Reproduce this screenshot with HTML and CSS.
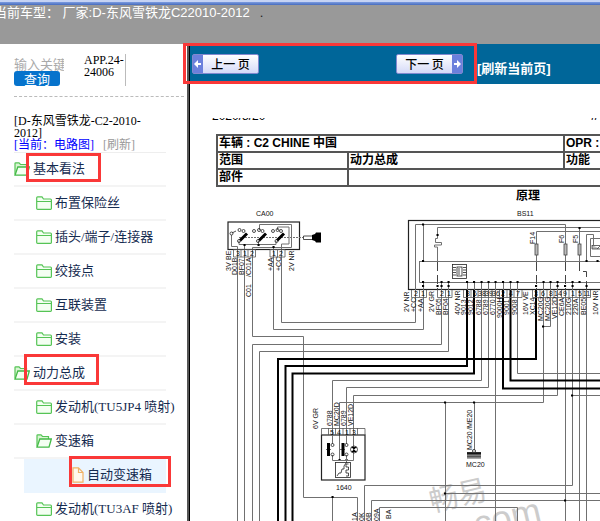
FILE: index.html
```html
<!DOCTYPE html>
<html lang="zh-CN">
<head>
<meta charset="utf-8">
<title>电路图</title>
<link rel="stylesheet" href="styles.css">
</head>
<body>
<svg class="defs" aria-hidden="true">
  <symbol id="closed" viewBox="0 0 16 14"><path d="M.7 12.5V1.7Q.7.8 1.6.8H6L7.5 3H14.500Q15.400 3 15.400 4V12.500Q15.400 13.300 14.500 13.300H1.600Q.7 13.300.7 12.500ZM1 5.500H15" fill="#f4fff2" stroke="#55c455" stroke-width="1.200"/></symbol>
  <symbol id="open" viewBox="0 0 16 14"><path d="M1 12.500V1.600Q1 .8 1.800.8H5L6.500 2.500H12.500V5" fill="#d9f5d3" stroke="#55c455" stroke-width="1.200"/><path d="M1 13.200L3.800 5H15.300L13 13.200Z" fill="#f4fff2" stroke="#45bb48" stroke-width="1.300"/></symbol>
  <symbol id="file" viewBox="0 0 12 16"><path d="M1 .8H6.500L11 5.500V15.200H1ZM6.500.8V5.500H11" fill="#fff8ec" stroke="#f0b266" stroke-width="1.200"/></symbol>
</svg>
<header class="top">当前车型： 厂家:<b>D-</b>东风雪铁龙<b>C22010-2012</b><i>.</i></header>
<div class="main">
  <aside class="side">
    <form class="search">
      <div class="query">
        <input type="text" placeholder="输入关键字" aria-label="输入关键字">
        <button type="button">查询</button>
      </div>
      <div class="code">APP.24-24006</div>
    </form>
    <div class="car">[D-东风雪铁龙-C2-2010-2012]</div>
    <div class="links"><a href="#" class="current">[当前：电路图]</a><a href="#" class="reload">[刷新]</a></div>
    <ul class="tree">
      <li><svg class="folder"><use href="#open"/></svg><a href="#">基本看法</a><span class="mark mark-a"></span></li>
      <li class="l2"><svg class="folder"><use href="#closed"/></svg><a href="#">布置保险丝</a></li>
      <li class="l2"><svg class="folder"><use href="#closed"/></svg><a href="#">插头/端子/连接器</a></li>
      <li class="l2"><svg class="folder"><use href="#closed"/></svg><a href="#">绞接点</a></li>
      <li class="l2"><svg class="folder"><use href="#closed"/></svg><a href="#">互联装置</a></li>
      <li class="l2"><svg class="folder"><use href="#closed"/></svg><a href="#">安装</a></li>
      <li><svg class="folder"><use href="#open"/></svg><a href="#">动力总成</a><span class="mark mark-b"></span></li>
      <li class="l2"><svg class="folder"><use href="#closed"/></svg><a href="#">发动机(TU5JP4 喷射)</a></li>
      <li class="l2"><svg class="folder"><use href="#open"/></svg><a href="#">变速箱</a></li>
      <li class="l3"><svg class="file"><use href="#file"/></svg><a href="#">自动变速箱</a><span class="mark mark-c"></span></li>
      <li class="l2"><svg class="folder"><use href="#closed"/></svg><a href="#">发动机(TU3AF 喷射)</a></li>
    </ul>
  </aside>
  <main class="view">
    <nav class="bar">
      <button type="button" class="page prev"><svg viewBox="0 0 10 18"><path d="M1 9L5 5V8H8V10H5V13Z"/></svg><span>上一 页</span></button>
      <button type="button" class="page next"><span>下一 页</span><svg viewBox="0 0 10 18"><path d="M9 9L5 5V8H2V10H5V13Z"/></svg></button>
      <a href="#">[刷新当前页]</a>
      <span class="mark mark-bar"></span>
    </nav>
    <div class="paper">
    <section class="sheet">
      <div class="date"><span>2020/8/20</span><span>//</span></div>
      <table>
        <colgroup><col class="c1"><col class="c2"><col></colgroup>
        <tr><td colspan="2">车辆 : C2 CHINE 中国</td><td>OPR : 1</td></tr>
        <tr><td>范围</td><td>动力总成</td><td>功能</td></tr>
        <tr><td>部件</td><td colspan="2"></td></tr>
      </table>
      <h1>原理</h1>
    </section>
    <svg class="wiring" viewBox="190 204 410 317" role="img" aria-label="原理">
      <g class="water"><text transform="translate(432 512) rotate(-13)" font-size="29">畅易</text><text transform="translate(467 539) rotate(-13)" font-size="36">.com</text></g>
      <!-- thin wires -->
      <path class="w" d="M237.500 249V521M244.500 249V521M252.500 249V336.500H303.500V497.500H357.500V521M252.500 521V344.500H441.500V290M259.500 521V351.500H448.500V290M273.500 249V329.500H423.500V290M281.500 249V322.500H415.500V290
      M332.500 435V380.500H481.500V290M339.500 460V402.500H543.500V290M346.500 435V387.500H488.500V290M353.500 435V395.500H557.500V290M332.500 497V521M495.500 290V521M517.500 290V373.500H600M550.500 290V326.500H543M565.500 290V521M572.500 290V485.500H364.500V521M572 395.500H600M579.500 290V521M586.500 290V521M371.500 521V500.500H600M379.500 521V507.500H517.500V521M445.500 402V521M445 493.500H600M474.500 402V450"/>
      <!-- heavy supply wires -->
      <path class="k" d="M278 521V359H536V290M285.500 521V366H467V290M292.500 521V373.500H474V290M503 290V388.500H600M510.500 290V380.500H600"/>
      <!-- ignition switch -->
      <rect class="box" x="228" y="222" width="71.500" height="27.500"/>
      <path class="w d" d="M239 237.500H303"/>
      <path class="w" d="M231.500 235V246.500H237.500V249M239 241V244.500H276V241M258.500 241V246M244.500 244V249M259.500 230V224.500H291.500V247.500H252.500V249M277.500 230V227H289V244H281.500V249M273.500 246V249"/>
      <path class="sw" d="M240 240.500L247 233.500M259 240.500L266 233.500M277 240.500L284 233.500"/>
      <g class="o"><circle cx="231.500" cy="233.500" r="1.500"/><circle cx="239.500" cy="230" r="1.500"/><circle cx="243.500" cy="231" r="1.500"/><circle cx="254" cy="231" r="1.500"/><circle cx="259" cy="230" r="1.500"/><circle cx="262.500" cy="231" r="1.500"/><circle cx="273" cy="231" r="1.500"/><circle cx="277.500" cy="230" r="1.500"/><circle cx="281" cy="231" r="1.500"/><circle cx="239" cy="241" r="1.500"/><circle cx="258" cy="241" r="1.500"/><circle cx="276.500" cy="241" r="1.500"/><path d="M232 233L236 231M303.500 236H313V239.500H303.500Z"/></g>
      <path d="M312 235L315 234L316 232.500H321V242.500H316L315 241L312 240Z"/>
      <path class="pin" d="M233.500 249.500H255.500V257H233.500ZM241 249V257M248 249V257M270 249.500H285V257H270ZM277.500 249V257"/>
      <!-- main control unit -->
      <rect class="box" x="408.500" y="220.500" width="200" height="69"/>
      <path class="w" d="M415.500 290V224.500H565.500V262M423.500 224V261M437.500 261V247H434.500V245H441.500V242.500H435.500V238.500H437.500V227.500H600M536.500 262V231.500H600M579.500 228V262M419.500 261.500H600M419.500 261V282.500H600M586.500 261V234.500H593.500V245M600 238.500H590.500V256.500H600"/>
      <path class="w dd" d="M437.500 262V290M536.500 262V290M565.500 262V290M579.500 262V271.500H586.500V290"/>
      <path class="w" d="M441.500 282V290M448.500 282V290M423.500 282V290M467.500 282V290M474.500 282V290M481.500 282V290M488.500 282V290M495.500 282V290M503.500 282V290M510.500 282V290M517.500 282V290M543.500 282V290M550.500 282V290M557.500 282V290M572.500 282V290"/>
      <g class="fuse"><rect x="535" y="244" width="3" height="11"/><rect x="564" y="244" width="3" height="11"/><rect x="578" y="244" width="3" height="11"/><path d="M592 245.500H600M592 245V249H600M597 249L600 246"/></g>
      <g class="o"><rect x="452.500" y="264.500" width="14" height="14"/><rect x="457" y="267" width="5" height="9"/><path d="M453 267.500H456M453 270H456M453 272.500H456M453 275H456M463 267.500H466M463 270H466M463 272.500H466M463 275H466M459 268V275"/></g>
      <path class="pin" d="M411.500 290V297.500H426.500V290M419.500 290V297M437.500 290V297.500H452V290M445.500 290V297M463.500 290V297.500H522V290M471 290V297M478 290V297M485 290V297M492 290V297M499.500 290V297M507 290V297M514 290V297M532.500 290V297.500H590.500V290M540 290V297M547 290V297M554 290V297M561.500 290V297M569 290V297M576 290V297M583 290V297"/>
      <!-- junctions -->
      <path class="dot" d="M423 224.500h.1M423 261h.1M437.500 235h.1M579.500 228h.1M586.500 261h.1M597.500 261h.1M423 282h.1M441.500 282h.1M448.500 282h.1M467 282h.1M474 282h.1M481.500 282h.1M488.500 282h.1M495.500 282h.1M503 282h.1M510.500 282h.1M517.500 282h.1M543.500 282h.1M550.500 282h.1M557.500 282h.1M572.500 282h.1M579.500 282h.1M423 286h.1M441.500 286h.1M448.500 286h.1M536 286h.1M557.500 286h.1M565 286h.1M572.500 286h.1M586.500 286h.1M437.500 286h.1M244.500 245h.1M258.500 245h.1M273.500 247h.1M543 326.500h.1M572 395.500h.1M445 402.500h.1M474 402.500h.1M445 493.500h.1M565 500.500h.1M332.500 497h.1M339.500 460h.1M346.500 460h.1"/>
      <!-- gear switch 1640 -->
      <rect class="box" x="321.500" y="435" width="43.500" height="45"/>
      <path class="pin" d="M321.500 435V428.500H365V435M328.500 428V435M335.500 428V435M343 428V435M350 428V435M357.500 428V435"/>
      <path class="w" d="M332.500 435V444M332.500 455V460.500H353.500V435M346.500 435V444M346.500 455V463M326 449.500H331M340 449.500H345"/>
      <path class="bar2" d="M328.500 443V456M343 443V456"/>
      <g class="o"><circle cx="332.500" cy="445" r="1.500"/><circle cx="332.500" cy="454.500" r="1.500"/><circle cx="346.500" cy="445" r="1.500"/><circle cx="346.500" cy="454.500" r="1.500"/><circle cx="354" cy="449.500" r="3.500"/><rect x="335.500" y="462.500" width="15" height="15"/><path d="M337 476L339 473H341L342 469H344V466L346 463M348.500 464H346V467H348.500V470H346V473H348.500V476H346"/></g>
      <path d="M351 447H357L354 449.500ZM351 452H357L354 449.500Z"/>
      <!-- ground -->
      <rect x="467" y="452.500" width="14" height="6" fill="#555"/><path d="M467 453H481" stroke="#000" stroke-width="1.500"/><path d="M467 455.500H481M467 457.500H481" stroke="#aaa" stroke-width=".5"/><circle cx="474" cy="451" r="1.500" fill="#fff" stroke="#111" stroke-width=".8"/>
      <g class="t">
        <text x="256" y="216">CA00</text><text x="517" y="216">BS11</text><text x="336" y="490">1640</text><text x="466" y="467">MC20</text>
        <g class="n"><text x="236" y="256">3</text><text x="243" y="256">1</text><text x="250" y="256">2</text><text x="272" y="256">1</text><text x="279" y="256">2</text><text x="414" y="296">2</text><text x="421" y="296">1</text><text x="440" y="296">2</text><text x="447" y="296">1</text><text x="466" y="296">8</text><text x="473" y="296">6</text><text x="478" y="296">38</text><text x="485" y="296">39</text><text x="492" y="296">36</text><text x="501" y="296">2</text><text x="509" y="296">4</text><text x="516" y="296">7</text><text x="534" y="296">3</text><text x="541" y="296">6</text><text x="549" y="296">8</text><text x="554" y="296">14</text><text x="563" y="296">9</text><text x="571" y="296">1</text><text x="578" y="296">5</text><text x="583" y="296">11</text><text x="330" y="435">5</text><text x="337" y="435">4</text><text x="345" y="435">1</text><text x="352" y="435">3</text></g>
        <text transform="translate(231 271) rotate(-90)">3V</text><text transform="translate(231 260) rotate(-90)">BE</text><text transform="translate(237 275) rotate(-90)">D01B</text><text transform="translate(244 275) rotate(-90)">BF07</text><text transform="translate(251 277) rotate(-90)">/C01A</text><text transform="translate(251 297) rotate(-90)">C01</text><text transform="translate(273 271) rotate(-90)">+AA</text><text transform="translate(281 271) rotate(-90)">+CC</text><text transform="translate(294 271) rotate(-90)">2V NR</text>
        <text transform="translate(409 312) rotate(-90)">2V NR</text><text transform="translate(416 312) rotate(-90)">+CC</text><text transform="translate(423 312) rotate(-90)">+AA</text><text transform="translate(434 312) rotate(-90)">2V GR</text><text transform="translate(441 315) rotate(-90)">BF05</text><text transform="translate(448 315) rotate(-90)">BF04</text><text transform="translate(460 315) rotate(-90)">40V NR</text><text transform="translate(466 315) rotate(-90)">9013</text><text transform="translate(473 315) rotate(-90)">9012</text><text transform="translate(481 315) rotate(-90)">6788</text><text transform="translate(488 315) rotate(-90)">6789</text><text transform="translate(495 315) rotate(-90)">6770</text><text transform="translate(502 318) rotate(-90)">9000H</text><text transform="translate(509 315) rotate(-90)">9001</text><text transform="translate(517 315) rotate(-90)">9008</text><text transform="translate(528 315) rotate(-90)">16V VE</text><text transform="translate(535 315) rotate(-90)">XC14</text><text transform="translate(543 321) rotate(-90)">MC20G</text><text transform="translate(550 321) rotate(-90)">MC20G</text><text transform="translate(557 319) rotate(-90)">VE12D</text><text transform="translate(564 316) rotate(-90)">CE6A</text><text transform="translate(571 315) rotate(-90)">210G</text><text transform="translate(578 315) rotate(-90)">220A</text><text transform="translate(586 315) rotate(-90)">BE05</text><text transform="translate(598 315) rotate(-90)">10V NR</text>
        <text transform="translate(535 244) rotate(-90)">F14</text><text transform="translate(564 243) rotate(-90)">F6</text><text transform="translate(578 243) rotate(-90)">F5</text>
        <text transform="translate(318 429) rotate(-90)">6V GR</text><text transform="translate(332 426) rotate(-90)">6788</text><text transform="translate(339 426) rotate(-90)">MC20D</text><text transform="translate(346 426) rotate(-90)">6789</text><text transform="translate(353 426) rotate(-90)">VE12D</text><text transform="translate(472 450) rotate(-90)">MC20</text><text transform="translate(472 430) rotate(-90)">/ME20</text><text transform="translate(357 521) rotate(-90)">1A</text><text transform="translate(364 521) rotate(-90)">0K</text><text transform="translate(371 521) rotate(-90)">6B</text><text transform="translate(379 521) rotate(-90)">09A</text><text transform="translate(391 519) rotate(-90)">BA</text>
      </g>
    </svg>
    </div>
  </main>
</div>
</body>
</html>
```

FILE: styles.css
```css
* { box-sizing: border-box; }
body { margin: 0; height: 100vh; overflow: hidden; display: flex; flex-direction: column; background: #fff; color: #000; font: 12px/12px "Liberation Serif", "Noto Sans CJK SC", serif; }
a { text-decoration: none; color: inherit; }
button { border: 0; padding: 0; font: inherit; }
.defs { position: absolute; width: 0; height: 0; }

.top { flex: none; height: 44px; margin-left: -6px; padding-top: 5px; white-space: nowrap; color: #fff; background: linear-gradient(#c5d3f4 2px, #7c9ce0 2px, #466bbd 5px, #999 5px); font: 13px/16px "Liberation Sans", "Noto Sans CJK SC", sans-serif; }
.top b { font-weight: normal; }
.top i { color: #222; font-style: normal; margin-left: 10px; }

.main { flex: 1; display: flex; min-height: 0; }
.side { flex: none; width: 190px; padding: 10px 0 0 14px; border-right: 1px solid #000; box-shadow: inset -2px 0 #555; }
.search { display: flex; align-items: flex-start; height: 43px; margin-right: 5px; border-bottom: 1px dashed #bbb; }
.query { width: 50px; margin-right: 20px; display: flex; flex-direction: column; align-items: flex-start; }
.query input { width: 50px; height: 17px; padding: 2px 0 0; border: 0; outline: 0; background: none; font: 13px/15px "Noto Sans CJK SC", sans-serif; }
.query input::placeholder { color: #aaa; opacity: 1; }
.query button { width: 46px; height: 15px; border-radius: 3px; background: #0673cc; color: #fff; font: 13px/15px "Noto Sans CJK SC", sans-serif; }
.code { width: 42px; height: 32px; border-right: 1px solid #bbb; }
.car { width: 140px; margin-top: 18px; line-height: 12px; }
.links { display: flex; gap: 9px; line-height: 13px; }
.current { color: #00f; }
.reload { color: #999; }

.tree { list-style: none; margin: 0 23px 0 0; padding: 0; border-top: 1px solid #eee; }
.tree li { position: relative; display: flex; align-items: center; gap: 3px; height: 34px; border-bottom: 2px solid #f4f4f4; white-space: nowrap; font-size: 13px; line-height: 16px; color: #152b50; }
.tree .l2 { padding-left: 22px; }
.tree .l3 { margin-left: 10px; padding-left: 48px; background: #eaf5ff; border-color: #eaf5ff; }
.folder { flex: none; width: 16px; height: 14px; }
.file { flex: none; width: 12px; height: 16px; }

/* callout frames */
.mark { position: absolute; z-index: 2; border: 3px solid #fa3838; pointer-events: none; }
.mark-a { left: 12px; top: 0; width: 75px; height: 29px; }
.mark-b { left: 10px; top: -3px; width: 75px; height: 31px; }
.mark-c { left: 45px; top: -3px; width: 102px; height: 31px; }
.mark-bar { left: -7px; top: -1px; width: 294px; height: 41px; }

.view { flex: 1; min-width: 0; }
.paper { overflow: hidden; }
.bar { position: relative; display: flex; align-items: center; height: 40px; padding-left: 2px; background: #069; }
.page { display: flex; width: 67px; height: 20px; border: 1px solid #8289cf; border-radius: 2px; background: linear-gradient(#fff, #d5daf8); color: #000; font: 500 12px/18px "Noto Sans CJK SC", sans-serif; }
.page span { flex: 1; white-space: nowrap; }
.page svg { width: 10px; height: 18px; background: #6b80dc; fill: #fff; }
.next { margin-left: 137px; }
.bar a { margin: 10px 0 0 14px; color: #fff; font: bold 13px/16px "Liberation Sans", "Noto Sans CJK SC", sans-serif; white-space: nowrap; }

.sheet { width: 624px; margin-left: 26px; padding-top: 34px; font: bold 12px/15px "Liberation Sans", "Noto Sans CJK SC", sans-serif; }
.date { display: flex; align-items: flex-end; gap: 326px; height: 3px; margin: 0 0 13px -4px; overflow: hidden; font-weight: normal; line-height: 9px; }
.sheet table { width: 100%; table-layout: fixed; border-collapse: collapse; }
.sheet td { height: 17px; padding: 0 0 0 1px; border: 2px solid #555; line-height: 15px; white-space: nowrap; }
.c1 { width: 131px; }
.c2 { width: 216px; }
.sheet h1 { margin: 1px 0 0; font: inherit; font-weight: bold; text-align: center; line-height: 16px; }

.wiring { display: block; width: 410px; height: 317px; }
.wiring .w { fill: none; stroke: #707070; }
.wiring .d { stroke-dasharray: 2 1; }
.wiring .dd { stroke: #444; stroke-dasharray: 9 4; }
.wiring .k { fill: none; stroke: #000; stroke-width: 2; }
.wiring .box { fill: none; stroke: #222; stroke-width: 1.2; }
.wiring .sw { fill: none; stroke: #000; stroke-width: 3; }
.wiring .o { fill: none; stroke: #222; stroke-width: .8; }
.wiring .pin { fill: none; stroke: #555; stroke-width: .8; }
.wiring .fuse { fill: #bbb; stroke: #444; stroke-width: .8; }
.wiring .dot { fill: none; stroke: #000; stroke-width: 2; stroke-linecap: square; }
.wiring .bar2 { fill: none; stroke: #000; stroke-width: 3; }
.wiring .t { font: 7px "Liberation Sans", sans-serif; fill: #111; }
.wiring .water { font-family: "Liberation Sans", "Noto Sans CJK SC", sans-serif; fill: #ccc; }
```
